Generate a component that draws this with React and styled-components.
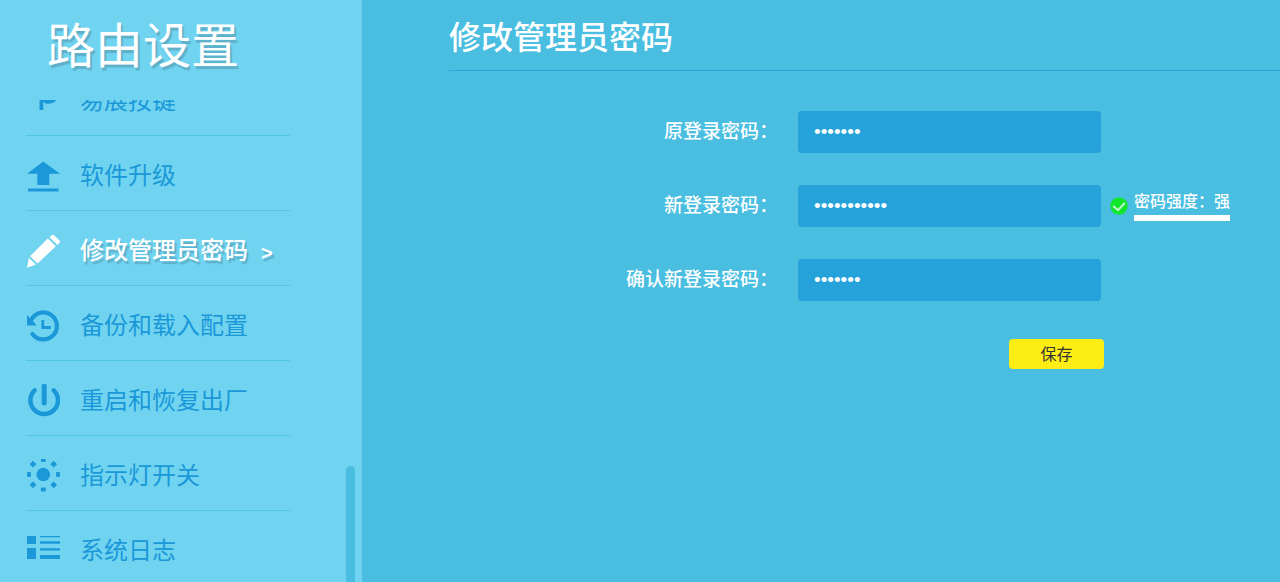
import React from "react";
import styled, { createGlobalStyle } from "styled-components";

const GlobalStyle = createGlobalStyle`
  * {
    box-sizing: border-box;
  }
  body {
    margin: 0;
    font-family: "Noto Sans CJK SC", sans-serif;
    background: #49bee1;
  }
`;

const KeyIcon = () => (
  <Icon viewBox="0 0 34 34">
    <path d="M13.5 3H22C28 3 31.5 6 31.5 11C31.5 17 27 19.8 22.5 19.8C20 19.8 18.5 19 17.300 18V26H13.500Z" />
  </Icon>
);

const UpgradeIcon = () => (
  <Icon viewBox="0 0 34 34">
    <path d="M17.3 2.5 34 14.8H23.3V26H11.3V14.8H1Z" />
    <path d="M2 29.500h30.5v3H2z" />
  </Icon>
);

const PencilIcon = () => (
  <Icon viewBox="0 0 34 34">
    <path d="M23.5 3.3 25.5 1.2Q26.7.4 28 1.2L33.6 6.5Q34.3 7.5 33.5 8.7L31.3 11Z" />
    <path d="M21.8 4.6 29.8 12.3 11.6 29.6 4 22.3Z" />
    <path d="M2.9 24 9.8 30.6 1 33.8Z" />
  </Icon>
);

const HistoryIcon = () => (
  <Icon viewBox="0 0 34 34">
    <path d="M5.5 10.5A13.5 13.5 0 1 1 6.5 25" fill="none" stroke="currentColor" strokeWidth="4.2" strokeLinecap="round" />
    <path d="M1 6 11 16.5H1Z" />
    <path d="M16.8 11v7.5h8" fill="none" stroke="currentColor" strokeWidth="2.8" />
  </Icon>
);

const PowerIcon = () => (
  <Icon viewBox="0 0 34 34">
    <path d="M8.6 6.3A13.8 13.8 0 1 0 27.8 6.3" fill="none" stroke="currentColor" strokeWidth="4.5" strokeLinecap="round" />
    <path d="M18.2 2v17" fill="none" stroke="currentColor" strokeWidth="5" strokeLinecap="round" />
  </Icon>
);

const LampIcon = () => (
  <Icon viewBox="0 0 34 34">
    <circle cx="17.3" cy="15.5" r="6.8" />
    <rect x="14.8" y="0" width="5" height="3" rx="1" />
    <rect x="14.8" y="28.5" width="5" height="4" rx="1" />
    <rect x="1" y="13" width="4" height="5" rx="1" />
    <rect x="30" y="13" width="4" height="5" rx="1" />
    <path d="M7 1.8 10.4 5.2 7 8.6 3.6 5.2ZM27.7 1.8l3.4 3.4-3.4 3.4-3.4-3.4ZM7 22.4l3.4 3.4-3.4 3.4-3.4-3.4ZM27.7 22.4l3.4 3.4-3.4 3.4-3.4-3.4Z" />
  </Icon>
);

const LogIcon = () => (
  <Icon viewBox="0 0 34 34">
    <path d="M1 2h9v8H1zM1 14h9v11H1z" />
    <path d="M14 2h20v1.3H14zM14 7.2h20v2.6H14zM14 14.2h20v2.4H14zM14 21h20v4H14z" />
  </Icon>
);

const menu = [
  { label: "易展按键", icon: KeyIcon },
  { label: "软件升级", icon: UpgradeIcon },
  { label: "修改管理员密码", icon: PencilIcon, active: true },
  { label: "备份和载入配置", icon: HistoryIcon },
  { label: "重启和恢复出厂", icon: PowerIcon },
  { label: "指示灯开关", icon: LampIcon },
  { label: "系统日志", icon: LogIcon },
];

const fields = [
  { id: "oldPwd", label: "原登录密码：", value: "admin12" },
  { id: "newPwd", label: "新登录密码：", value: "Router#2024", strength: "强" },
  { id: "confirmPwd", label: "确认新登录密码：", value: "Router#" },
];

export default function App() {
  return (
    <StyledPage lang="zh-CN">
      <GlobalStyle />
      <StyledSidebar>
        <StyledSidebarTitle>路由设置</StyledSidebarTitle>
        <StyledScrollPane>
          <StyledMenu>
            {menu.map(({ label, icon: ItemIcon, active }) => (
              <StyledMenuItem key={label}>
                <StyledMenuLink href="#" $active={active}>
                  <ItemIcon />
                  <StyledMenuText>{label}</StyledMenuText>
                  {active && <StyledArrow>&gt;</StyledArrow>}
                </StyledMenuLink>
              </StyledMenuItem>
            ))}
          </StyledMenu>
          <StyledScrollThumb />
        </StyledScrollPane>
      </StyledSidebar>
      <StyledMain>
        <StyledHeading>修改管理员密码</StyledHeading>
        <StyledForm onSubmit={(e) => e.preventDefault()}>
          {fields.map((field) => (
            <StyledField key={field.id}>
              <StyledLabel htmlFor={field.id}>{field.label}</StyledLabel>
              <StyledInput id={field.id} type="password" defaultValue={field.value} />
              {field.strength && (
                <StyledStrength>
                  <CheckIcon viewBox="0 0 18 18">
                    <circle cx="9" cy="9" r="8.7" fill="#12e62c" />
                    <path d="M3.2 9 8 13.2 14.8 6" fill="none" stroke="#c3f7cf" strokeWidth="2" />
                  </CheckIcon>
                  <StyledStrengthText>密码强度：{field.strength}</StyledStrengthText>
                </StyledStrength>
              )}
            </StyledField>
          ))}
          <StyledSave type="submit">保存</StyledSave>
        </StyledForm>
      </StyledMain>
    </StyledPage>
  );
}

const StyledPage = styled.div`
  display: flex;
  height: 100vh;
  overflow: hidden;
`;

const StyledSidebar = styled.aside`
  display: flex;
  flex-direction: column;
  flex: 0 0 362px;
  background: #70d4f1;
`;

const StyledSidebarTitle = styled.h1`
  flex: none;
  height: 100px;
  margin: 0;
  padding: 6px 0 0 47px;
  font-size: 48px;
  font-weight: 400;
  line-height: 72px;
  color: #fff;
  text-shadow: 2px 3px 1px rgba(70, 120, 140, 0.4);
`;

const StyledScrollPane = styled.nav`
  display: flex;
  flex: 1;
  min-height: 0;
  justify-content: space-between;
  padding: 0 7px 0 26px;
  overflow: hidden;
`;

/* list is scrolled part of the way past its first entry */
const StyledMenu = styled.ul`
  width: 264px;
  margin: -39px 0 0;
  padding: 0;
  list-style: none;
`;

const StyledMenuItem = styled.li`
  height: 75px;
  border-bottom: 1px solid #52c5e7;
`;

const StyledMenuLink = styled.a`
  display: flex;
  align-items: center;
  height: 100%;
  padding-top: 6px;
  font-size: 24px;
  line-height: 36px;
  text-decoration: none;
  white-space: nowrap;
  color: ${({ $active }) => ($active ? "#fff" : "#1a98d8")};
  text-shadow: ${({ $active }) => ($active ? "2px 3px 1px rgba(70, 120, 140, 0.4)" : "none")};
  font-weight: ${({ $active }) => ($active ? 500 : 400)};
`;

const StyledMenuText = styled.span`
  padding-bottom: 4px;
`;

const Icon = styled.svg`
  flex: none;
  width: 34px;
  height: 34px;
  margin-right: 20px;
  fill: currentColor;
`;

const StyledArrow = styled.span`
  margin-left: 13px;
  padding-top: 4px;
  font-family: "Liberation Sans", sans-serif;
  font-size: 20px;
  font-weight: 700;
`;

const StyledScrollThumb = styled.div`
  align-self: flex-end;
  width: 9px;
  height: 24%;
  border-radius: 5px 5px 0 0;
  background: #49bee1;
`;

const StyledMain = styled.main`
  flex: 1;
  min-width: 0;
  padding-left: 87px;
`;

const StyledHeading = styled.h2`
  height: 71px;
  margin: 0;
  padding-top: 11px;
  border-bottom: 1px solid #2ba6da;
  font-size: 32px;
  font-weight: 500;
  line-height: 48px;
  color: #fff;
`;

const StyledForm = styled.form`
  display: flex;
  flex-direction: column;
  gap: 32px;
  padding-top: 40px;
`;

const StyledField = styled.div`
  display: flex;
  align-items: center;
  height: 42px;
`;

const StyledLabel = styled.label`
  width: 329px;
  margin-right: 20px;
  padding-bottom: 5px;
  font-size: 19px;
  font-weight: 500;
  line-height: 28px;
  text-align: right;
  white-space: nowrap;
  color: #fff;
`;

const StyledInput = styled.input`
  width: 303px;
  height: 42px;
  padding: 0 16px;
  border: 0;
  border-radius: 4px;
  outline: 0;
  font-family: "Liberation Sans", sans-serif;
  font-size: 19px;
  color: #fff;
  background: #26a2da;
`;

const StyledStrength = styled.div`
  display: flex;
  align-items: center;
  gap: 6px;
  margin-left: 9px;
`;

const CheckIcon = styled.svg`
  width: 18px;
  height: 18px;
`;

const StyledStrengthText = styled.span`
  margin-bottom: 2px;
  padding-bottom: 4px;
  border-bottom: 6px solid #fff;
  font-size: 16px;
  font-weight: 500;
  line-height: 22px;
  white-space: nowrap;
  color: #fff;
`;

const StyledSave = styled.button`
  width: 95px;
  height: 30px;
  margin: 6px 0 0 560px;
  padding: 0 0 3px;
  border: 0;
  border-radius: 4px;
  font-family: inherit;
  font-size: 16px;
  font-weight: 400;
  color: #333;
  background: #fced14;
  cursor: pointer;
`;
